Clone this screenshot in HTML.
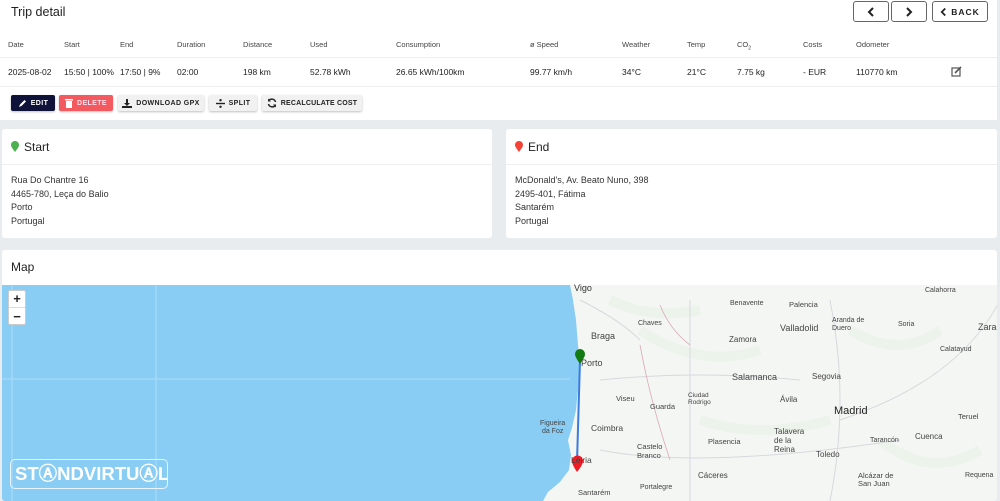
<!DOCTYPE html>
<html><head><meta charset="utf-8"><style>
*{box-sizing:border-box;margin:0;padding:0}
body{width:1000px;height:501px;overflow:hidden;background:#e9ecef;font-family:"Liberation Sans",sans-serif;color:#222;position:relative}
.card{position:absolute;background:#fff;border-radius:3px}
.t{position:absolute;white-space:nowrap}
.h{font-size:7.5px;color:#444}
.v{font-size:8.5px;color:#222}
.nb{position:absolute;top:1px;height:21px;border:1px solid #666;border-radius:3px;background:#fff;font-size:8.5px;font-weight:bold;letter-spacing:1px;display:flex;align-items:center;justify-content:center;gap:4px;color:#222}
.b{position:absolute;top:95px;height:16px;border-radius:2px;font-size:7px;font-weight:bold;letter-spacing:.4px;display:flex;align-items:center;justify-content:center;gap:4px;background:#f1f1f1;color:#222;box-shadow:0 1px 2px rgba(0,0,0,.25);white-space:nowrap}
.addr{font-size:9px;line-height:13.5px;color:#333}
.ttl{font-size:12px;color:#222}
.ml{position:absolute;font-size:8px;color:#444;white-space:nowrap}
</style></head><body>
<div class="card" style="left:0;top:0;width:997px;height:120px;border-radius:0">
<div class="t" style="left:11px;top:5px;font-size:12.5px">Trip detail</div>
<div class="nb" style="left:853px;width:36px"><svg width="8" height="10" viewBox="0 0 8 10"><path d="M6 1L2 5l4 4" fill="none" stroke="#222" stroke-width="2"/></svg></div>
<div class="nb" style="left:891px;width:36px"><svg width="8" height="10" viewBox="0 0 8 10"><path d="M2 1l4 4-4 4" fill="none" stroke="#222" stroke-width="2"/></svg></div>
<div class="nb" style="left:932px;width:56px"><svg width="7" height="10" viewBox="0 0 8 10"><path d="M6 1L2 5l4 4" fill="none" stroke="#222" stroke-width="2"/></svg>BACK</div>
<div style="position:absolute;left:0;top:57px;width:997px;height:1px;background:#eee"></div>
<div style="position:absolute;left:0;top:86px;width:997px;height:1px;background:#eee"></div>
<div class="t h" style="left:8px;top:40px">Date</div>
<div class="t h" style="left:64px;top:40px">Start</div>
<div class="t h" style="left:120px;top:40px">End</div>
<div class="t h" style="left:177px;top:40px">Duration</div>
<div class="t h" style="left:243px;top:40px">Distance</div>
<div class="t h" style="left:310px;top:40px">Used</div>
<div class="t h" style="left:396px;top:40px">Consumption</div>
<div class="t h" style="left:530px;top:40px">ø Speed</div>
<div class="t h" style="left:622px;top:40px">Weather</div>
<div class="t h" style="left:687px;top:40px">Temp</div>
<div class="t h" style="left:737px;top:40px">CO<sub style="font-size:5px">2</sub></div>
<div class="t h" style="left:803px;top:40px">Costs</div>
<div class="t h" style="left:856px;top:40px">Odometer</div>
<div class="t v" style="left:8px;top:67px">2025-08-02</div>
<div class="t v" style="left:64px;top:67px">15:50 | 100%</div>
<div class="t v" style="left:120px;top:67px">17:50 | 9%</div>
<div class="t v" style="left:177px;top:67px">02:00</div>
<div class="t v" style="left:243px;top:67px">198 km</div>
<div class="t v" style="left:310px;top:67px">52.78 kWh</div>
<div class="t v" style="left:396px;top:67px">26.65 kWh/100km</div>
<div class="t v" style="left:530px;top:67px">99.77 km/h</div>
<div class="t v" style="left:622px;top:67px">34°C</div>
<div class="t v" style="left:687px;top:67px">21°C</div>
<div class="t v" style="left:737px;top:67px">7.75 kg</div>
<div class="t v" style="left:803px;top:67px">- EUR</div>
<div class="t v" style="left:856px;top:67px">110770 km</div>
<svg style="position:absolute;left:951px;top:66px" width="11" height="11" viewBox="0 0 11 11"><rect x="1" y="2" width="8" height="8" fill="none" stroke="#555" stroke-width="1.2"/><path d="M4 7 L10 1" stroke="#555" stroke-width="1.6"/></svg>
<div class="b" style="left:11px;width:44px;background:#0f1239;color:#fff"><svg width="9" height="9" viewBox="0 0 9 9"><path d="M1 8 L2 5.5 L6.5 1 L8 2.5 L3.5 7 Z" fill="#fff"/></svg>EDIT</div>
<div class="b" style="left:59px;width:54px;background:#f25a5f;color:#fde"><svg width="8" height="10" viewBox="0 0 8 10"><rect x="0" y="1" width="8" height="1.5" fill="#fff"/><rect x="1" y="3" width="6" height="7" fill="#fff"/></svg>DELETE</div>
<div class="b" style="left:118px;width:86px"><svg width="10" height="9" viewBox="0 0 10 9"><path d="M4 0h2v4h2L5 7 2 4h2z M0 7h10v2H0z" fill="#222"/></svg>DOWNLOAD GPX</div>
<div class="b" style="left:209px;width:48px"><svg width="9" height="9" viewBox="0 0 9 9"><circle cx="4.5" cy="1.2" r="1.2" fill="#222"/><rect x="0" y="3.8" width="9" height="1.4" fill="#222"/><circle cx="4.5" cy="7.8" r="1.2" fill="#222"/></svg>SPLIT</div>
<div class="b" style="left:262px;width:100px;letter-spacing:.2px"><svg width="10" height="10" viewBox="0 0 10 10"><path d="M8.5 4A3.8 3.8 0 0 0 1.8 2.6M1.5 6A3.8 3.8 0 0 0 8.2 7.4" fill="none" stroke="#222" stroke-width="1.5"/><path d="M1 0.5v3h3zM9 9.5v-3H6z" fill="#222"/></svg>RECALCULATE COST</div>
</div>

<div class="card" style="left:2px;top:129px;width:490px;height:109px">
<svg style="position:absolute;left:9px;top:12px" width="8" height="11" viewBox="0 0 8 11"><path d="M4 11C1 7 0 5.5 0 4a4 4 0 0 1 8 0c0 1.5-1 3-4 7z" fill="#4caf50"/></svg>
<div class="t ttl" style="left:22px;top:11px">Start</div>
<div style="position:absolute;left:0;top:35px;width:100%;height:1px;background:#eee"></div>
<div class="t addr" style="left:9px;top:45px">Rua Do Chantre 16<br>4465-780, Leça do Balio<br>Porto<br>Portugal</div>
</div>
<div class="card" style="left:506px;top:129px;width:491px;height:109px">
<svg style="position:absolute;left:9px;top:12px" width="8" height="11" viewBox="0 0 8 11"><path d="M4 11C1 7 0 5.5 0 4a4 4 0 0 1 8 0c0 1.5-1 3-4 7z" fill="#f44336"/></svg>
<div class="t ttl" style="left:22px;top:11px">End</div>
<div style="position:absolute;left:0;top:35px;width:100%;height:1px;background:#eee"></div>
<div class="t addr" style="left:9px;top:45px">McDonald's, Av. Beato Nuno, 398<br>2495-401, Fátima<br>Santarém<br>Portugal</div>
</div>

<div class="card" style="left:2px;top:250px;width:995px;height:251px;overflow:hidden">
<div class="t ttl" style="left:9px;top:10px">Map</div>
<svg style="position:absolute;left:0;top:35px" width="995" height="216" viewBox="2 285 995 216">
<rect x="2" y="285" width="995" height="216" fill="#8acdf4"/>
<line x1="12" y1="285" x2="12" y2="501" stroke="#a9dcf8" stroke-width="1"/>
<line x1="156" y1="285" x2="156" y2="501" stroke="#a9dcf8" stroke-width="1"/>
<line x1="2" y1="379" x2="570" y2="379" stroke="#a9dcf8" stroke-width="1"/>
<path d="M570 285 L573 300 L576 320 L578 345 L580 365 L578 390 L576 410 L572 428 L568 440 L571 455 L569 470 L560 482 L548 492 L543 501 L997 501 L997 285 Z" fill="#f4f6f3"/>
<path d="M610 300 Q650 320 700 310 M640 330 Q700 370 760 350 M700 420 Q760 440 830 420 M850 330 Q900 360 940 330 M880 440 Q930 480 980 450" stroke="#e6f1e6" stroke-width="10" fill="none" opacity=".6"/>
<path d="M580 300 Q620 320 640 340 M690 300 L690 501 M600 380 Q700 370 800 380 M830 300 Q850 400 830 501 M1000 300 Q960 380 840 420 M600 450 Q700 470 900 440" stroke="#d8d8de" stroke-width="1" fill="none"/>
<path d="M660 305 Q670 330 690 345 M640 345 Q650 400 670 460" stroke="#d9a9b8" stroke-width="0.8" fill="none"/>
<line x1="580" y1="360" x2="577" y2="462" stroke="#3a7be0" stroke-width="2"/>
<path d="M580 364C576 358 575 356 575 354a5 5 0 0 1 10 0c0 2-1 4-5 10z" fill="#127b12"/>
<path d="M577 472C573 466 572 463 572 461a5.5 5.5 0 0 1 11 0c0 2-1 5-6 11z" fill="#ee1c25"/>
</svg>
<div style="position:absolute;left:6px;top:40px;width:18px;height:35px;background:#fff;border:1px solid #ccc;border-radius:2px;font-size:13px;font-weight:bold;text-align:center;line-height:16px;color:#222">+<div style="border-top:1px solid #ddd;line-height:17px">−</div></div>
<div style="position:absolute;left:8px;top:209px;width:158px;height:30px;border:1px solid #e6f5ff;border-radius:5px;color:#fff;font-size:18.5px;font-weight:bold;line-height:28px;padding-left:4px;letter-spacing:0;white-space:nowrap;overflow:hidden">ST&#x24B6;NDVIRTU&#x24B6;L</div>
</div>

<div style="position:absolute;left:0;top:0;width:1000px;height:501px;overflow:hidden;pointer-events:none">
<div class="ml" style="left:574px;top:283px;font-size:9px;color:#333">Vigo</div>
<div class="ml" style="left:591px;top:331px;font-size:9px">Braga</div>
<div class="ml" style="left:581px;top:358px;font-size:9px">Porto</div>
<div class="ml" style="left:638px;top:320px;font-size:7px">Chaves</div>
<div class="ml" style="left:730px;top:300px;font-size:7px">Benavente</div>
<div class="ml" style="left:789px;top:300px;font-size:7.5px">Palencia</div>
<div class="ml" style="left:780px;top:323px;font-size:9px">Valladolid</div>
<div class="ml" style="left:729px;top:335px;font-size:8px">Zamora</div>
<div class="ml" style="left:732px;top:372px;font-size:9px">Salamanca</div>
<div class="ml" style="left:812px;top:372px;font-size:8px">Segovia</div>
<div class="ml" style="left:780px;top:395px;font-size:8px">Ávila</div>
<div class="ml" style="left:834px;top:405px;font-size:11px;color:#222">Madrid</div>
<div class="ml" style="left:616px;top:394px;font-size:7.5px">Viseu</div>
<div class="ml" style="left:650px;top:402px;font-size:7.5px">Guarda</div>
<div class="ml" style="left:591px;top:423px;font-size:8.5px">Coimbra</div>
<div class="ml" style="left:540px;top:420px;font-size:7px;text-align:center;line-height:8px">Figueira<br>da Foz</div>
<div class="ml" style="left:637px;top:442px;font-size:7.5px;line-height:9px">Castelo<br>Branco</div>
<div class="ml" style="left:708px;top:437px;font-size:7.5px">Plasencia</div>
<div class="ml" style="left:774px;top:427px;font-size:8px;line-height:9px">Talavera<br>de la<br>Reina</div>
<div class="ml" style="left:816px;top:450px;font-size:8px">Toledo</div>
<div class="ml" style="left:870px;top:437px;font-size:7px">Tarancón</div>
<div class="ml" style="left:915px;top:432px;font-size:8px">Cuenca</div>
<div class="ml" style="left:958px;top:412px;font-size:7.5px">Teruel</div>
<div class="ml" style="left:698px;top:471px;font-size:8px">Cáceres</div>
<div class="ml" style="left:640px;top:484px;font-size:7px">Portalegre</div>
<div class="ml" style="left:578px;top:488px;font-size:7.5px">Santarém</div>
<div class="ml" style="left:858px;top:472px;font-size:7.5px;line-height:8px">Alcázar de<br>San Juan</div>
<div class="ml" style="left:965px;top:472px;font-size:7px">Requena</div>
<div class="ml" style="left:978px;top:322px;font-size:9px">Zara</div>
<div class="ml" style="left:925px;top:287px;font-size:7px">Calahorra</div>
<div class="ml" style="left:898px;top:321px;font-size:7px">Soria</div>
<div class="ml" style="left:940px;top:346px;font-size:7px">Calatayud</div>
<div class="ml" style="left:832px;top:317px;font-size:7px;line-height:8px">Aranda de<br>Duero</div>
<div class="ml" style="left:688px;top:392px;font-size:6.5px;line-height:7px">Ciudad<br>Rodrigo</div>
<div class="ml" style="left:571px;top:455px;font-size:8.5px">Leiria</div>
</div>
</body></html>
